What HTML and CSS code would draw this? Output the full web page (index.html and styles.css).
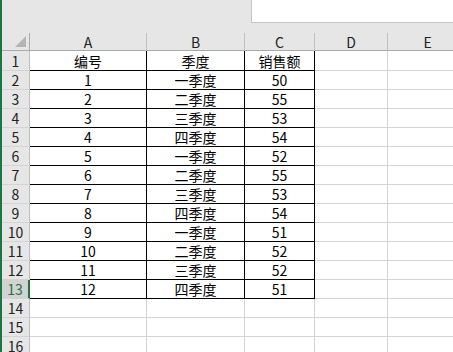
FILE: index.html
```html
<!DOCTYPE html>
<html lang="zh">
<head>
<meta charset="utf-8">
<link rel="stylesheet" href="styles.css">
</head>
<body>
<div class="sheet">
  <div class="topbar"><div class="namebox"></div></div>
  <div class="grid">
    <div class="corner"><span class="tri"></span></div>
    <div class="ch">A</div><div class="ch">B</div><div class="ch">C</div><div class="ch">D</div><div class="ch">E</div>

    <div class="rh r1">1</div><div class="c t r1">编号</div><div class="c t r1">季度</div><div class="c t r1">销售额</div><div class="c r1"></div><div class="c r1"></div>
    <div class="rh">2</div><div class="c t">1</div><div class="c t">一季度</div><div class="c t">50</div><div class="c"></div><div class="c"></div>
    <div class="rh">3</div><div class="c t">2</div><div class="c t">二季度</div><div class="c t">55</div><div class="c"></div><div class="c"></div>
    <div class="rh">4</div><div class="c t">3</div><div class="c t">三季度</div><div class="c t">53</div><div class="c"></div><div class="c"></div>
    <div class="rh">5</div><div class="c t">4</div><div class="c t">四季度</div><div class="c t">54</div><div class="c"></div><div class="c"></div>
    <div class="rh">6</div><div class="c t">5</div><div class="c t">一季度</div><div class="c t">52</div><div class="c"></div><div class="c"></div>
    <div class="rh">7</div><div class="c t">6</div><div class="c t">二季度</div><div class="c t">55</div><div class="c"></div><div class="c"></div>
    <div class="rh">8</div><div class="c t">7</div><div class="c t">三季度</div><div class="c t">53</div><div class="c"></div><div class="c"></div>
    <div class="rh">9</div><div class="c t">8</div><div class="c t">四季度</div><div class="c t">54</div><div class="c"></div><div class="c"></div>
    <div class="rh">10</div><div class="c t">9</div><div class="c t">一季度</div><div class="c t">51</div><div class="c"></div><div class="c"></div>
    <div class="rh">11</div><div class="c t">10</div><div class="c t">二季度</div><div class="c t">52</div><div class="c"></div><div class="c"></div>
    <div class="rh">12</div><div class="c t">11</div><div class="c t">三季度</div><div class="c t">52</div><div class="c"></div><div class="c"></div>
    <div class="rh sel">13</div><div class="c t">12</div><div class="c t">四季度</div><div class="c t">51</div><div class="c"></div><div class="c"></div>
    <div class="rh">14</div><div class="c"></div><div class="c"></div><div class="c"></div><div class="c"></div><div class="c"></div>
    <div class="rh">15</div><div class="c"></div><div class="c"></div><div class="c"></div><div class="c"></div><div class="c"></div>
    <div class="rh">16</div><div class="c"></div><div class="c"></div><div class="c"></div><div class="c"></div><div class="c"></div>
  </div>
</div>
</body>
</html>
```

FILE: styles.css
```css
html, body {
  margin: 0;
  padding: 0;
  background: #ffffff;
  overflow: hidden;
}
.sheet {
  width: 453px;
  height: 352px;
  border-left: 2px solid #217346;
  box-sizing: border-box;
  font-family: "Noto Sans CJK SC", "Noto Sans", sans-serif;
  font-size: 14px;
  color: #000;
  overflow: hidden;
}
.topbar {
  height: 33px;
  background: #e6e6e6;
}
.namebox {
  margin-left: 249px;
  height: 23px;
  box-sizing: border-box;
  background: #ffffff;
  border-left: 1px solid #c6c6c6;
  border-bottom: 1px solid #c6c6c6;
}
.grid {
  display: grid;
  grid-template-columns: 28px 117px 98px 70px 73px 80px;
  grid-template-rows: 18px 20px repeat(15, 19px);
}
.grid > div {
  box-sizing: border-box;
  display: flex;
  align-items: center;
  justify-content: center;
  line-height: 1;
  white-space: nowrap;
}
.corner {
  background: #e6e6e6;
  border-right: 1px solid #ababab;
  border-bottom: 1px solid #ababab;
  position: relative;
}
.tri {
  position: absolute;
  right: 3px;
  bottom: 3px;
  width: 0;
  height: 0;
  border-left: 11px solid transparent;
  border-bottom: 11px solid #b4b4b4;
}
.ch {
  background: #e6e6e6;
  border-right: 1px solid #bfbfbf;
  border-bottom: 1px solid #ababab;
  color: #222;
  padding-top: 1px;
}
.rh {
  background: #e6e6e6;
  border-right: 1px solid #bfbfbf;
  border-bottom: 1px solid #d4d4d4;
  color: #222;
}
.rh.sel {
  background: #d2d2d2;
  color: #217346;
  border-right: 2px solid #217346;
}
.c {
  border-right: 1px solid #d4d4d4;
  border-bottom: 1px solid #d4d4d4;
}
.c.t {
  border-right-color: #000;
  border-bottom-color: #000;
}
```
